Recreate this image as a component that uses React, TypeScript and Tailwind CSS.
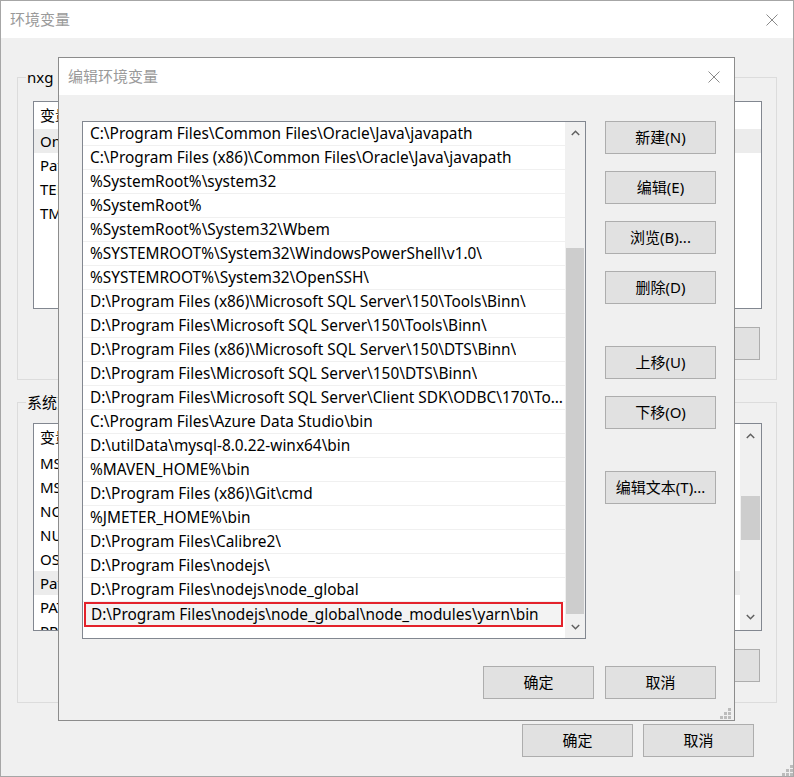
import React from "react";

const font = "font-['Noto_Sans','Noto_Sans_CJK_SC',sans-serif]";

const paths = [
  "C:\\Program Files\\Common Files\\Oracle\\Java\\javapath",
  "C:\\Program Files (x86)\\Common Files\\Oracle\\Java\\javapath",
  "%SystemRoot%\\system32",
  "%SystemRoot%",
  "%SystemRoot%\\System32\\Wbem",
  "%SYSTEMROOT%\\System32\\WindowsPowerShell\\v1.0\\",
  "%SYSTEMROOT%\\System32\\OpenSSH\\",
  "D:\\Program Files (x86)\\Microsoft SQL Server\\150\\Tools\\Binn\\",
  "D:\\Program Files\\Microsoft SQL Server\\150\\Tools\\Binn\\",
  "D:\\Program Files (x86)\\Microsoft SQL Server\\150\\DTS\\Binn\\",
  "D:\\Program Files\\Microsoft SQL Server\\150\\DTS\\Binn\\",
  "D:\\Program Files\\Microsoft SQL Server\\Client SDK\\ODBC\\170\\Tools\\Binn\\",
  "C:\\Program Files\\Azure Data Studio\\bin",
  "D:\\utilData\\mysql-8.0.22-winx64\\bin",
  "%MAVEN_HOME%\\bin",
  "D:\\Program Files (x86)\\Git\\cmd",
  "%JMETER_HOME%\\bin",
  "D:\\Program Files\\Calibre2\\",
  "D:\\Program Files\\nodejs\\",
  "D:\\Program Files\\nodejs\\node_global",
  "D:\\Program Files\\nodejs\\node_global\\node_modules\\yarn\\bin",
];

const userVars = [
  ["OneDrive", "C:\\Users\\nxg\\OneDrive"],
  ["Path", "C:\\Users\\nxg\\AppData\\Local\\Microsoft\\WindowsApps;"],
  ["TEMP", "C:\\Users\\nxg\\AppData\\Local\\Temp"],
  ["TMP", "C:\\Users\\nxg\\AppData\\Local\\Temp"],
];

const sysVars = [
  ["MSMPI_BENCHMARKS", "C:\\Program Files\\Microsoft MPI\\Benchmarks\\"],
  ["MSMPI_BIN", "C:\\Program Files\\Microsoft MPI\\Bin\\"],
  ["NODE_PATH", "D:\\Program Files\\nodejs\\node_global\\node_modules"],
  ["NUMBER_OF_PROCESSORS", "8"],
  ["OS", "Windows_NT"],
  ["Path", "C:\\Program Files\\Common Files\\Oracle\\Java\\javapath;"],
  ["PATHEXT", ".COM;.EXE;.BAT;.CMD;.VBS;.VBE;.JS;.JSE;.WSF;.WSH;.MSC"],
  ["PROCESSOR_ARCHITECTURE", "AMD64"],
];

function CloseX() {
  return (
    <svg width="12" height="12" viewBox="0 0 12 12">
      <path d="M0.5 0.5 L11.5 11.5 M11.5 0.5 L0.5 11.5" stroke="#8a8a8a" strokeWidth="1" />
    </svg>
  );
}

function Grip() {
  const dots = [
    [8, 0],
    [4, 4],
    [8, 4],
    [0, 8],
    [4, 8],
    [8, 8],
  ];
  return (
    <svg width="11" height="11" viewBox="0 0 11 11">
      {dots.map(([x, y], i) => (
        <rect key={i} x={x} y={y} width="3" height="3" fill="#bcbcbc" />
      ))}
    </svg>
  );
}

function Chevron({ down }: { down?: boolean }) {
  return (
    <svg width="9" height="6" viewBox="0 0 9 6">
      <path
        d={down ? "M0.8 1 L4.5 4.7 L8.2 1" : "M0.8 5 L4.5 1.3 L8.2 5"}
        fill="none"
        stroke="#606060"
        strokeWidth="1.5"
      />
    </svg>
  );
}

function Btn({ label, className = "" }: { label: string; className?: string }) {
  return (
    <button
      className={`h-[33px] w-[111px] shrink-0 border border-[#adadad] bg-[#e1e1e1] text-[15px] text-black ${className}`}
    >
      {label}
    </button>
  );
}

function VarList({
  rows,
  selected,
  scroll,
}: {
  rows: string[][];
  selected: number;
  scroll?: boolean;
}) {
  return (
    <div className="flex h-[208px] overflow-hidden border border-[#828790] bg-white">
      <div className="flex min-w-0 flex-1 flex-col">
        <div className="flex h-[27px] shrink-0 items-center text-[15px]">
          <div className="w-[160px] shrink-0 border-r border-[#e5e5e5] pl-[6px]">变量</div>
          <div className="pl-[6px]">值</div>
        </div>
        {rows.map(([k, v], i) => (
          <div
            key={k + i}
            className={`flex h-[24px] shrink-0 items-center text-[15px] ${i === selected ? "bg-[#ececec]" : ""}`}
          >
            <div className="w-[160px] shrink-0 truncate pl-[6px]">{k}</div>
            <div className="truncate pl-[6px]">{v}</div>
          </div>
        ))}
      </div>
      {scroll && (
        <div className="flex w-[21px] shrink-0 flex-col bg-[#f0f0f0]">
          <div className="flex h-[20px] items-center justify-center pt-[4px]">
            <Chevron />
          </div>
          <div className="flex-1 px-[1px] pt-[52px]">
            <div className="h-[44px] bg-[#cdcdcd]" />
          </div>
          <div className="flex h-[20px] items-center justify-center pb-[6px]">
            <Chevron down />
          </div>
        </div>
      )}
    </div>
  );
}

function GroupBox({
  title,
  rows,
  selected,
  scroll,
  className = "",
}: {
  title: string;
  rows: string[][];
  selected: number;
  scroll?: boolean;
  className?: string;
}) {
  return (
    <div className={`relative flex flex-col border border-[#dcdcdc] pl-[15px] pr-[14px] ${className}`}>
      <span className="absolute -top-[12px] left-[8px] bg-[#f0f0f0] px-[1px] text-[15px] leading-[22px]">
        {title}
      </span>
      <VarList rows={rows} selected={selected} scroll={scroll} />
      <div className="mr-[2px] mt-[18px] flex justify-end gap-[10px]">
        <Btn label="新建(W)..." />
        <Btn label="编辑(I)..." />
        <Btn label="删除(L)" />
      </div>
    </div>
  );
}

function EditDialog() {
  return (
    <div className="absolute left-[58px] top-[57px] flex h-[664px] w-[677px] flex-col border border-[#8c8c8c] bg-[#f0f0f0]">
      <div className="flex h-[37px] shrink-0 items-center justify-between bg-white pl-[9px] pr-[14px]">
        <span className="text-[15px] text-[#9a9a9a]">编辑环境变量</span>
        <CloseX />
      </div>
      <div className="flex pl-[23px] pt-[26px]">
        <div className="flex h-[518px] w-[504px] shrink-0 border border-[#828790] bg-white">
          <div className="flex min-w-0 flex-1 flex-col">
            {paths.map((p, i) => {
              const last = i === paths.length - 1;
              return (
                <div
                  key={p}
                  className={
                    last
                      ? "ml-[1px] mr-[2px] flex h-[25px] shrink-0 items-center border-2 border-[#e3222b] bg-[#f3f3f3] pl-[5px] text-[15.4px]"
                      : "flex h-[24px] shrink-0 items-center border-b border-[#f0f0f0] pl-[7px] pr-[2px] text-[15.4px]"
                  }
                >
                  <span className="truncate">{p}</span>
                </div>
              );
            })}
          </div>
          <div className="flex w-[20px] shrink-0 flex-col bg-[#f0f0f0]">
            <div className="flex h-[20px] items-center justify-center pt-[2px]">
              <Chevron />
            </div>
            <div className="flex-1 px-[1px] pt-[106px]">
              <div className="h-[366px] bg-[#cdcdcd]" />
            </div>
            <div className="flex h-[20px] items-center justify-center pb-[2px]">
              <Chevron down />
            </div>
          </div>
        </div>
        <div className="ml-[19px] flex flex-col">
          <Btn label="新建(N)" />
          <Btn label="编辑(E)" className="mt-[17px]" />
          <Btn label="浏览(B)..." className="mt-[17px]" />
          <Btn label="删除(D)" className="mt-[17px]" />
          <Btn label="上移(U)" className="mt-[42px]" />
          <Btn label="下移(O)" className="mt-[17px]" />
          <Btn label="编辑文本(T)..." className="mt-[42px]" />
        </div>
      </div>
      <div className="mr-[18px] mt-[27px] flex justify-end gap-[11px]">
        <Btn label="确定" />
        <Btn label="取消" />
      </div>
      <div className="absolute bottom-[1px] right-[3px]">
        <Grip />
      </div>
    </div>
  );
}

export default function App() {
  return (
    <div className={`relative h-[777px] w-[794px] overflow-hidden text-black ${font}`}>
      <div className="flex h-full w-full flex-col border border-[#a6a6a6] bg-[#f0f0f0]">
        <div className="flex h-[37px] shrink-0 items-center justify-between bg-white pl-[9px] pr-[15px]">
          <span className="text-[15px] text-[#9a9a9a]">环境变量</span>
          <CloseX />
        </div>
        <div className="flex flex-col px-[16px]">
          <GroupBox title="nxg 的用户变量(U)" rows={userVars} selected={0} className="mt-[39px] h-[303px] pt-[23px]" />
          <GroupBox
            title="系统变量(S)"
            rows={sysVars}
            selected={5}
            scroll
            className="mt-[22px] h-[301px] pt-[20px]"
          />
        </div>
        <div className="mr-[39px] mt-[21px] flex justify-end gap-[10px]">
          <Btn label="确定" />
          <Btn label="取消" />
        </div>
        <div className="absolute bottom-[1px] right-[1px]">
          <Grip />
        </div>
      </div>
      <EditDialog />
    </div>
  );
}
